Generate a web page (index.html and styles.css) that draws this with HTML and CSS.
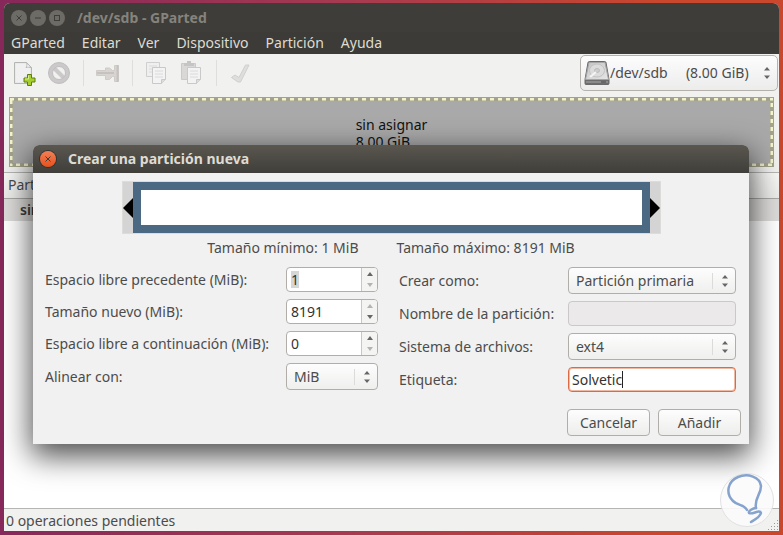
FILE: index.html
```html
<!DOCTYPE html>
<html lang="es">
<head>
    <meta charset="UTF-8">
    <meta name="viewport" content="width=device-width, initial-scale=1.0">
    <title>/dev/sdb - GParted</title>
    <link rel="stylesheet" href="styles.css">
</head>
<body>
    <div class="window">
        <header class="title-bar">
            <button class="win-btn" aria-label="Cerrar"><svg viewBox="0 0 16 16"><path d="M5.5 5.5l5 5M10.5 5.5l-5 5"/></svg></button>
            <button class="win-btn" aria-label="Minimizar"><svg viewBox="0 0 16 16"><path d="M5 8h6"/></svg></button>
            <button class="win-btn" aria-label="Maximizar"><svg viewBox="0 0 16 16"><rect x="5.5" y="5.5" width="5" height="5"/></svg></button>
            <h1>/dev/sdb - GParted</h1>
        </header>
        <nav class="menu-bar">
            <a href="#">GParted</a>
            <a href="#">Editar</a>
            <a href="#">Ver</a>
            <a href="#">Dispositivo</a>
            <a href="#">Partición</a>
            <a href="#">Ayuda</a>
        </nav>
        <div class="toolbar">
            <button class="tool" aria-label="Nueva">
                <svg viewBox="0 0 24 26">
                    <path d="M2.5 2.5h12l5 5v16h-17z" fill="#e3e4e3" stroke="#b4b6b4"/>
                    <path d="M3.5 3.5h10.5l4.5 4.500v6l-6 2v6.500h-9z" fill="#f0f0f0"/>
                    <path d="M14.500 2.500c1 2 .5 3.500-.5 5 2-.6 4-.5 5.500.5z" fill="#fff" stroke="#b4b6b4"/>
                    <path d="M15.500 14.500h4v3.500h3.500v4h-3.500v3.500h-4v-3.500h-3.500v-4h3.500z" fill="#a5cf2c" stroke="#5d7f0c"/>
                    <path d="M16.500 15.500v3.500h-3.500" fill="none" stroke="#dcf08a"/>
                </svg>
            </button>
            <button class="tool" aria-label="Borrar" disabled>
                <svg viewBox="0 0 24 26">
                    <circle cx="12" cy="13" r="8.500" fill="none" stroke="#cbc9c9" stroke-width="4"/>
                    <path d="M6 7l12 12" stroke="#cbc9c9" stroke-width="4"/>
                    <circle cx="12" cy="13" r="10.500" fill="none" stroke="#c0bebe"/>
                    <circle cx="12" cy="13" r="6.500" fill="none" stroke="#c0bebe"/>
                </svg>
            </button>
            <span class="separator"></span>
            <button class="tool" aria-label="Redimensionar/Mover" disabled>
                <svg viewBox="0 0 24 26">
                    <path d="M.5 10.500h9v-2.500h4l3 2.500h2v-5h4v16h-4v-5h-2l-3 3h-4v-4h-9z" fill="#d8d4d2" stroke="#cfcbc9"/>
                    <path d="M1 13h17" stroke="#c6c2c0" stroke-width="2"/>
                    <path d="M21.500 5v17" stroke="#c6c2c0" stroke-width="2"/>
                </svg>
            </button>
            <span class="separator"></span>
            <button class="tool" aria-label="Copiar" disabled>
                <svg viewBox="0 0 24 26">
                    <path d="M1.500 2.500h13v14h-13z" fill="#efefef" stroke="#cfcfcf"/>
                    <path d="M4 6h8M4 9h4M4 12h3" stroke="#dadada"/>
                    <path d="M7.500 7.500h13v12l-4 4h-9z" fill="#f3f3f3" stroke="#c9c9c9"/>
                    <path d="M10 11h8M10 14h8M10 17h8" stroke="#dadada"/>
                    <path d="M20.500 19.500h-4v4" fill="#ddd" stroke="#c9c9c9"/>
                </svg>
            </button>
            <button class="tool" aria-label="Pegar" disabled>
                <svg viewBox="0 0 24 26">
                    <path d="M1.500 3.500h14v16h-14z" fill="#dad8d7" stroke="#cccac9"/>
                    <path d="M4 6v-3h3v-2h4v2h3v3z" fill="#c5c5c5"/>
                    <path d="M7.500 7.500h13v12l-4 4h-9z" fill="#f3f3f3" stroke="#c9c9c9"/>
                    <path d="M10 11h8M10 14h8M10 17h8" stroke="#dadada"/>
                    <path d="M20.500 19.500h-4v4" fill="#ddd" stroke="#c9c9c9"/>
                </svg>
            </button>
            <span class="separator"></span>
            <button class="tool" aria-label="Aplicar" disabled>
                <svg viewBox="0 0 24 26">
                    <path d="M2.500 17.500l3.500-2.500 4 2.500 6.500-12.500h3.500l-8.500 17h-2.500z" fill="#dededd" stroke="#cfcfce"/>
                </svg>
            </button>
            <label class="device">
                <svg viewBox="0 0 26 26" aria-hidden="true">
                    <defs>
                        <linearGradient id="disk-top" x1="0" y1="0" x2="1" y2="1">
                            <stop offset="0" stop-color="#c4c4c4"/>
                            <stop offset="1" stop-color="#e6e6e6"/>
                        </linearGradient>
                    </defs>
                    <path d="M4 2.500q.3-1 1.500-1h15q1.200 0 1.500 1l3 17v4q0 1-1 1h-22q-1 0-1-1v-4z" fill="#6d6d6d" stroke="#6a6a6a"/>
                    <path d="M5 2.500h16l3.500 17h-23z" fill="url(#disk-top)" stroke="#a5a5a5"/>
                    <path d="M2 21h22v2h-22z" fill="#8b8b8b"/>
                    <path d="M17 22h5" stroke="#444"/>
                    <ellipse cx="13" cy="10.500" rx="7.500" ry="6.500" fill="#dcdcdc" stroke="#c3c3c3"/>
                    <ellipse cx="13" cy="10.500" rx="2.500" ry="2" fill="#cecece" stroke="#bbb"/>
                    <path d="M6 17l6-5" stroke="#f5f5f5" stroke-width="2"/>
                </svg>
                <select aria-label="Dispositivo">
                    <option>/dev/sdb&nbsp;&nbsp;&nbsp;&nbsp; (8.00 GiB)</option>
                </select>
            </label>
        </div>
        <div class="disk-map">
            <svg class="disk-dash" aria-hidden="true">
                <rect width="100%" height="100%"/>
                <rect class="dashes" width="100%" height="100%"/>
            </svg>
            <div class="disk-label">sin asignar<br>8.00 GiB</div>
        </div>
        <div class="partitions">
            <table>
                <thead><tr><th>Partición</th></tr></thead>
                <tbody><tr><td>sin asignar</td></tr></tbody>
            </table>
        </div>
        <footer class="status-bar">0 operaciones pendientes</footer>
    </div>

    <form class="dialog" role="dialog" aria-labelledby="dialog-title">
        <div class="dialog-title">
            <button type="button" class="close-btn" aria-label="Cerrar"><svg viewBox="0 0 16 16"><path d="M5.5 5.5l5 5M10.5 5.5l-5 5"/></svg></button>
            <h2 id="dialog-title">Crear una partición nueva</h2>
        </div>
        <div class="dialog-body">
            <div class="resizer">
                <span class="handle"><svg viewBox="0 0 10 20"><path d="M10 0v20l-10-10z"/></svg></span>
                <span class="space"></span>
                <span class="handle"><svg viewBox="0 0 10 20"><path d="M0 0v20l10-10z"/></svg></span>
            </div>
            <div class="limits">
                <span>Tamaño mínimo: 1 MiB</span>
                <span>Tamaño máximo: 8191 MiB</span>
            </div>
            <div class="fields">
                <div class="column sizes">
                    <label for="before">Espacio libre precedente (MiB):</label>
                    <div class="spin">
                        <input id="before" class="selected" type="text" inputmode="numeric" value="1">
                        <div class="arrows">
                            <button type="button" aria-label="Más"><svg viewBox="0 0 6 4"><path d="M0 4l3-4 3 4z"/></svg></button>
                            <button type="button" aria-label="Menos" disabled><svg viewBox="0 0 6 4"><path d="M0 0l3 4 3-4z"/></svg></button>
                        </div>
                    </div>
                    <label for="size">Tamaño nuevo (MiB):</label>
                    <div class="spin">
                        <input id="size" type="text" inputmode="numeric" value="8191">
                        <div class="arrows">
                            <button type="button" aria-label="Más" disabled><svg viewBox="0 0 6 4"><path d="M0 4l3-4 3 4z"/></svg></button>
                            <button type="button" aria-label="Menos"><svg viewBox="0 0 6 4"><path d="M0 0l3 4 3-4z"/></svg></button>
                        </div>
                    </div>
                    <label for="after">Espacio libre a continuación (MiB):</label>
                    <div class="spin">
                        <input id="after" type="text" inputmode="numeric" value="0">
                        <div class="arrows">
                            <button type="button" aria-label="Más"><svg viewBox="0 0 6 4"><path d="M0 4l3-4 3 4z"/></svg></button>
                            <button type="button" aria-label="Menos" disabled><svg viewBox="0 0 6 4"><path d="M0 0l3 4 3-4z"/></svg></button>
                        </div>
                    </div>
                    <label for="align">Alinear con:</label>
                    <select id="align" class="combo"><option>MiB</option></select>
                </div>
                <div class="column">
                    <label for="type">Crear como:</label>
                    <select id="type" class="combo"><option>Partición primaria</option></select>
                    <label for="name">Nombre de la partición:</label>
                    <input id="name" class="entry" type="text" disabled>
                    <label for="fs">Sistema de archivos:</label>
                    <select id="fs" class="combo"><option>ext4</option></select>
                    <label for="tag">Etiqueta:</label>
                    <div class="entry focused">
                        <input id="tag" type="text" value="Solvetic">
                        <span class="caret"></span>
                    </div>
                </div>
            </div>
            <div class="actions">
                <button type="button">Cancelar</button>
                <button type="submit">Añadir</button>
            </div>
        </div>
    </form>

    <svg class="watermark" viewBox="0 0 56 56" aria-hidden="true">
        <circle cx="28" cy="28" r="26.500" fill="#fbfbfc" fill-opacity=".9" stroke="#e2e2e2"/>
        <path d="M28 38C25 32 19 34 14 29C6 21 9 9 19 5C29 1 41 5 42 14C42 23 35 26 37 36" fill="none" stroke="#86a3cd" stroke-width="2.500" stroke-linecap="round"/>
        <path d="M37 36C34 36 29 39 30 41C33 43 41 37 42 41C41 45 37 47 32 50" fill="none" stroke="#86a3cd" stroke-width="2.500" stroke-linecap="round"/>
    </svg>
    <span class="grip"></span>
</body>
</html>
```
FILE: styles.css
```css
* {
    box-sizing: border-box;
}
body {
    display: flex;
    height: 100vh;
    margin: 0;
    padding: 3px 4px 4px;
    font-family: "Noto Sans", "Open Sans", sans-serif;
    font-size: 14px;
    line-height: 18px;
    color: #4c4c4c;
    background: linear-gradient(90deg, #86285a, #a63a50 45%, #c9472d 85%);
    overflow: hidden;
}
button, input, select {
    font: inherit;
    color: inherit;
    margin: 0;
    padding: 0;
    border: none;
    background: none;
    outline: none;
}
h1, h2 {
    margin: 0;
    font-size: 14px;
    font-weight: bold;
}
.window {
    flex: 1;
    display: flex;
    flex-direction: column;
    background-color: #f1f1f0;
    border-radius: 6px 6px 0 0;
    overflow: hidden;
}
.title-bar {
    display: flex;
    align-items: center;
    gap: 3px;
    height: 29px;
    padding: 0 7px;
    background-color: #3e3d39;
    color: #85837c;
}
.title-bar h1 {
    margin-left: 9px;
}
.win-btn {
    width: 16px;
    height: 16px;
    border-radius: 50%;
    background-color: #6d6b66;
}
.win-btn svg, .close-btn svg {
    display: block;
    fill: none;
    stroke: #3e3d39;
}
.menu-bar {
    display: flex;
    align-items: center;
    gap: 17px;
    height: 22px;
    padding: 0 7px;
    background-color: #3c3b37;
}
.menu-bar a {
    color: #dfdbd2;
    text-decoration: none;
}
.toolbar {
    display: flex;
    align-items: center;
    gap: 11px;
    height: 38px;
    padding: 0 1px 0 8px;
}
.tool {
    width: 24px;
    height: 26px;
}
.tool svg {
    display: block;
}
.separator {
    width: 1px;
    height: 26px;
    margin: 0 1px;
    background-color: #dededd;
}
.device {
    display: flex;
    align-items: center;
    width: 198px;
    height: 36px;
    margin-left: auto;
    padding-left: 3px;
    border: 1px solid #b5b2ae;
    border-radius: 5px;
    background: linear-gradient(#fdfdfd, #ececeb);
}
.device svg {
    width: 26px;
    height: 26px;
}
.device select, .combo {
    appearance: none;
    background: url("data:image/svg+xml,%3Csvg xmlns='http://www.w3.org/2000/svg' width='6' height='12'%3E%3Cpath d='M0 3.500l3-3.500 3 3.500zM0 8.500l3 3.500 3-3.500z' fill='%23666'/%3E%3C/svg%3E") no-repeat right 7px center;
}
.device select {
    flex: 1;
    height: 34px;
}
.disk-map {
    position: relative;
    display: flex;
    justify-content: center;
    height: 70px;
    margin: 5px 5px 0;
    padding-top: 18px;
    border: 1px solid #a3a38c;
    background-color: #a9a9a9;
    color: #111;
}
.disk-dash {
    position: absolute;
    inset: 0;
    width: 100%;
    height: 100%;
}
.disk-dash rect {
    fill: none;
    stroke: #a3a38c;
    stroke-width: 6;
}
.disk-dash .dashes {
    stroke: #f3f3cd;
    stroke-width: 5;
    stroke-dasharray: 4 4;
}
.disk-label {
    line-height: 17px;
}
.partitions {
    flex: 1;
    margin-top: 5px;
    background-color: #fff;
    border-top: 1px solid #b5b5b3;
    border-bottom: 1px solid #b5b5b3;
}
.partitions table {
    width: 100%;
    border-collapse: collapse;
    text-align: left;
}
.partitions th {
    height: 25px;
    padding: 0 4px;
    font-weight: normal;
    background: linear-gradient(#f7f7f6, #ebebea);
    border-bottom: 1px solid #a8a8a6;
}
.partitions td {
    height: 23px;
    padding: 0 16px;
    font-weight: 600;
    color: #3c3c3c;
    background-color: #dcdbd9;
}
.status-bar {
    height: 22px;
    padding: 3px 2px 1px;
}
.dialog {
    position: absolute;
    top: 145px;
    left: 33px;
    right: 34px;
    border-radius: 6px 6px 0 0;
    background-color: #f1f1f1;
    box-shadow: 0 10px 30px 2px rgba(0, 0, 0, 0.7);
}
.dialog-title {
    display: flex;
    align-items: center;
    gap: 12px;
    height: 28px;
    padding: 0 7px;
    border-radius: 6px 6px 0 0;
    background: linear-gradient(#5a574f, #3f3e3a);
    color: #dfdbd2;
}
.close-btn {
    width: 16px;
    height: 16px;
    border-radius: 50%;
    background: linear-gradient(#f47f55, #e5521f);
    box-shadow: 0 0 0 1px #34332f;
}
.dialog-body {
    padding: 8px;
}
.resizer {
    display: flex;
    width: 77%;
    height: 53px;
    margin: 0 auto;
    border: 1px solid #dcdcd9;
}
.handle {
    display: flex;
    align-items: center;
    width: 10px;
    background-color: #d3d4d3;
}
.handle svg {
    width: 10px;
    height: 20px;
}
.space {
    flex: 1;
    border: 8px solid #4b6983;
    background-color: #fff;
}
.limits {
    display: flex;
    justify-content: center;
    gap: 38px;
    padding: 5px 0 10px;
}
.fields {
    display: flex;
    align-items: flex-start;
    justify-content: space-between;
    padding: 0 5px 0 4px;
}
.column {
    display: grid;
    grid-template-columns: 169px 168px;
    row-gap: 7px;
    align-items: center;
}
.sizes {
    grid-template-columns: 241px 92px;
}
.column label {
    white-space: nowrap;
}
.spin {
    display: flex;
    height: 25px;
    border: 1px solid #b1aeaa;
    border-radius: 4px;
    background-color: #fff;
    overflow: hidden;
}
.spin input {
    flex: 1;
    min-width: 0;
    padding-left: 4px;
    color: #333;
}
.spin .selected {
    background: linear-gradient(#d6d6d6, #d6d6d6) no-repeat 4px center / 8px 17px;
}
.arrows {
    display: flex;
    flex-direction: column;
    width: 16px;
    border-left: 1px solid #c9c7c4;
    background-color: #f4f4f3;
}
.arrows button {
    flex: 1;
    display: flex;
    align-items: center;
    justify-content: center;
}
.arrows svg {
    width: 6px;
    height: 4px;
    fill: #666;
}
.arrows button:disabled svg {
    fill: #b3b3b3;
}
.combo {
    height: 27px;
    padding: 0 7px;
    border: 1px solid #b1aeaa;
    border-radius: 4px;
    background-color: #f8f8f7;
    background-image: url("data:image/svg+xml,%3Csvg xmlns='http://www.w3.org/2000/svg' width='16' height='16'%3E%3Cpath d='M10 5.500l3-3.500 3 3.500zM10 10.500l3 3.500 3-3.500z' fill='%23666'/%3E%3Cpath d='M.5 0v16' stroke='%23dcdbd9'/%3E%3C/svg%3E"), linear-gradient(#fdfdfd, #efefee);
    background-position: right 7px center, 0 0;
}
.entry {
    display: flex;
    align-items: center;
    height: 25px;
    padding: 0 3px;
    border: 1px solid #b1aeaa;
    border-radius: 4px;
    background-color: #fff;
    color: #333;
}
.entry:disabled {
    background-color: #ebe9e9;
    border-color: #cbc8c7;
}
.focused {
    border-color: #dd6a43;
    box-shadow: inset 0 0 0 1px #f0b9a4;
}
.focused input {
    field-sizing: content;
}
.caret {
    width: 1px;
    height: 17px;
    background-color: #222;
}
.actions {
    display: flex;
    justify-content: flex-end;
    gap: 8px;
    margin-top: 17px;
}
.actions button {
    width: 83px;
    height: 27px;
    border: 1px solid #b1aeaa;
    border-radius: 4px;
    background: linear-gradient(#fdfdfd, #ededec);
}
.watermark {
    position: absolute;
    right: 8px;
    bottom: 7px;
    width: 56px;
    height: 56px;
}
.grip {
    position: absolute;
    right: 5px;
    bottom: 5px;
    width: 11px;
    height: 11px;
    background: radial-gradient(circle, #999 1px, transparent 1px) 0 0 / 3px 3px;
    clip-path: polygon(100% 0, 100% 100%, 0 100%);
}
```
